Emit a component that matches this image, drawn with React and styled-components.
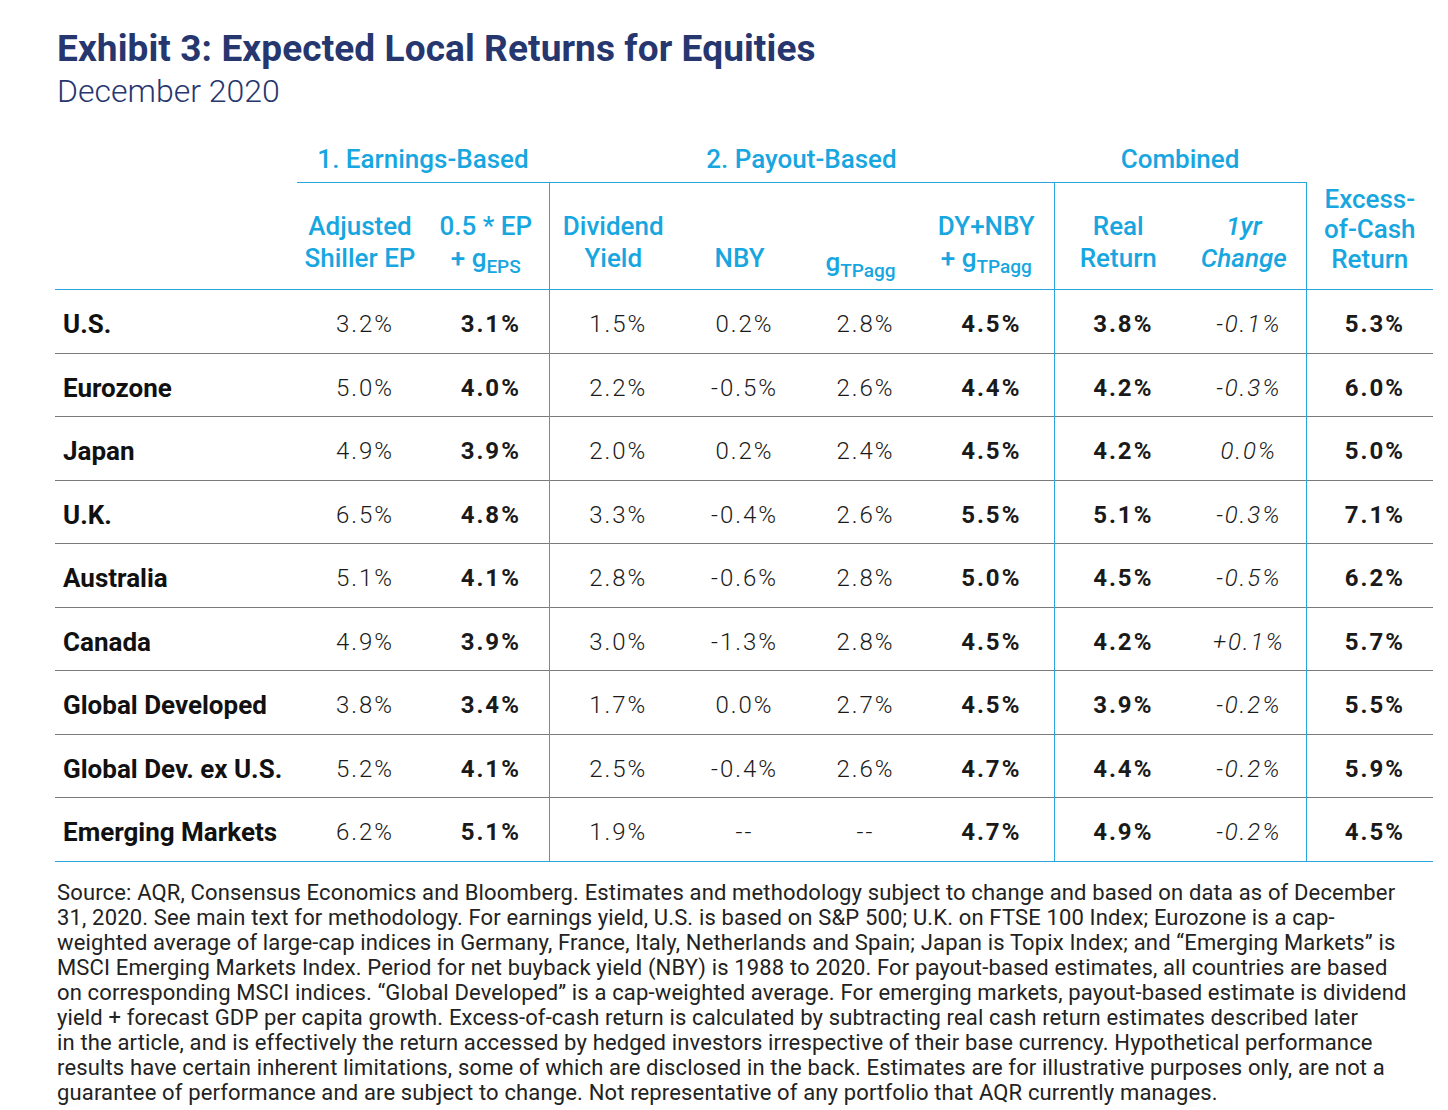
import React from 'react';
import styled, { createGlobalStyle } from 'styled-components';

const GlobalStyle = createGlobalStyle`
  body { margin: 0; background: #fff; font-family: Roboto, "Liberation Sans", sans-serif; }
`;

const rows = [
  ['U.S.', '3.2%', '3.1%', '1.5%', '0.2%', '2.8%', '4.5%', '3.8%', '-0.1%', '5.3%'],
  ['Eurozone', '5.0%', '4.0%', '2.2%', '-0.5%', '2.6%', '4.4%', '4.2%', '-0.3%', '6.0%'],
  ['Japan', '4.9%', '3.9%', '2.0%', '0.2%', '2.4%', '4.5%', '4.2%', '0.0%', '5.0%'],
  ['U.K.', '6.5%', '4.8%', '3.3%', '-0.4%', '2.6%', '5.5%', '5.1%', '-0.3%', '7.1%'],
  ['Australia', '5.1%', '4.1%', '2.8%', '-0.6%', '2.8%', '5.0%', '4.5%', '-0.5%', '6.2%'],
  ['Canada', '4.9%', '3.9%', '3.0%', '-1.3%', '2.8%', '4.5%', '4.2%', '+0.1%', '5.7%'],
  ['Global Developed', '3.8%', '3.4%', '1.7%', '0.0%', '2.7%', '4.5%', '3.9%', '-0.2%', '5.5%'],
  ['Global Dev. ex U.S.', '5.2%', '4.1%', '2.5%', '-0.4%', '2.6%', '4.7%', '4.4%', '-0.2%', '5.9%'],
  ['Emerging Markets', '6.2%', '5.1%', '1.9%', '--', '--', '4.7%', '4.9%', '-0.2%', '4.5%'],
];

// how each value column is drawn
const kinds = ['light', 'bold', 'light', 'light', 'light', 'bold', 'bold', 'italic', 'bold'];
// value columns that start a new group (blue rule on the left)
const splits = [2, 6, 8];
const widths = [242, 126, 126, 128, 125, 117, 135, 128, 124, 127];

const notes = [
  'Source: AQR, Consensus Economics and Bloomberg. Estimates and methodology subject to change and based on data as of December',
  '31, 2020. See main text for methodology. For earnings yield, U.S. is based on S&P 500; U.K. on FTSE 100 Index; Eurozone is a cap-',
  'weighted average of large-cap indices in Germany, France, Italy, Netherlands and Spain; Japan is Topix Index; and \u201cEmerging Markets\u201d is',
  'MSCI Emerging Markets Index. Period for net buyback yield (NBY) is 1988 to 2020. For payout-based estimates, all countries are based',
  'on corresponding MSCI indices. \u201cGlobal Developed\u201d is a cap-weighted average. For emerging markets, payout-based estimate is dividend',
  'yield + forecast GDP per capita growth. Excess-of-cash return is calculated by subtracting real cash return estimates described later',
  'in the article, and is effectively the return accessed by hedged investors irrespective of their base currency. Hypothetical performance',
  'results have certain inherent limitations, some of which are disclosed in the back. Estimates are for illustrative purposes only, are not a',
  'guarantee of performance and are subject to change. Not representative of any portfolio that AQR currently manages.',
];

function App() {
  return (
    <Page>
      <GlobalStyle />
      <Title>Exhibit 3: Expected Local Returns for Equities</Title>
      <Subtitle>December 2020</Subtitle>

      <Table>
        <colgroup>
          {widths.map((w, i) => <col key={i} style={{ width: w }} />)}
        </colgroup>
        <thead>
          <tr>
            <GroupCell $blank />
            <GroupCell colSpan={2}>1. Earnings-Based</GroupCell>
            <GroupCell colSpan={4}>2. Payout-Based</GroupCell>
            <GroupCell colSpan={2}>Combined</GroupCell>
            <GroupCell $blank />
          </tr>
          <SubRow>
            <HeadCell />
            <HeadCell>Adjusted<br />Shiller EP</HeadCell>
            <HeadCell>0.5 * EP<br />+ g<Sub>EPS</Sub></HeadCell>
            <HeadCell $split>Dividend<br />Yield</HeadCell>
            <HeadCell>NBY</HeadCell>
            <HeadCell><Low>g<Sub>TPagg</Sub></Low></HeadCell>
            <HeadCell>DY+NBY<br />+ g<Sub>TPagg</Sub></HeadCell>
            <HeadCell $split>Real<br />Return</HeadCell>
            <HeadCell $italic>1yr<br />Change</HeadCell>
            <HeadCell $split $tall>Excess-<br />of-Cash<br />Return</HeadCell>
          </SubRow>
        </thead>
        <tbody>
          {rows.map((r, ri) => (
            <DataRow key={r[0]} $last={ri === rows.length - 1}>
              <Label>{r[0]}</Label>
              {r.slice(1).map((v, ci) => (
                <Value key={ci} $kind={kinds[ci]} $split={splits.includes(ci)}>{v}</Value>
              ))}
            </DataRow>
          ))}
        </tbody>
      </Table>

      <Notes>
        {notes.map((n, i) => <NoteLine key={i}>{n}</NoteLine>)}
      </Notes>
    </Page>
  );
}

const navy = '#26366f';
const cyan = '#17a6e0';
const rule = '#2aa6dc';

const Page = styled.div`
  width: 1448px;
  height: 1110px;
  padding: 27px 15px 0 55px;
  box-sizing: border-box;
  overflow: hidden;
`;

const Title = styled.h1`
  margin: 0 0 0 2px;
  font-family: Roboto, "Liberation Sans", sans-serif;
  font-weight: 700;
  font-size: 37px;
  line-height: 44px;
  letter-spacing: 0.1px;
  color: ${navy};
`;

const Subtitle = styled.div`
  margin: 0 0 0 2px;
  font-weight: 300;
  font-size: 32px;
  line-height: 40px;
  color: ${navy};
`;

const Table = styled.table`
  margin-top: 21px;
  width: 1378px;
  border-collapse: collapse;
  table-layout: fixed;
`;

const GroupCell = styled.th`
  height: 42px;
  padding: 0 0 8px;
  vertical-align: bottom;
  font-weight: 500;
  font-size: 26px;
  color: ${cyan};
  text-align: center;
  border-bottom: ${p => (p.$blank ? 'none' : `1px solid ${rule}`)};
`;

const SubRow = styled.tr`
  height: 107px;
  border-bottom: 1px solid ${rule};
`;

const HeadCell = styled.th`
  padding: 0 0 15px;
  vertical-align: bottom;
  text-align: center;
  font-weight: 500;
  font-size: 26px;
  line-height: ${p => (p.$tall ? '30px' : '32px')};
  font-style: ${p => (p.$italic ? 'italic' : 'normal')};
  color: ${cyan};
  border-left: ${p => (p.$split ? `1px solid ${rule}` : 'none')};
`;

const Sub = styled.sub`
  font-size: 19px;
  vertical-align: -6px;
  line-height: 0;
`;

const Low = styled.span`
  position: relative;
  top: 4px;
`;

const DataRow = styled.tr`
  height: 63.5px;
  border-bottom: 1px solid ${p => (p.$last ? rule : '#7a7a7a')};
`;

const Label = styled.td`
  padding: 6px 0 0 8px;
  font-weight: 700;
  font-size: 26px;
  color: #111;
  white-space: nowrap;
`;

const Value = styled.td`
  padding: 6px 0 0 10px;
  text-align: center;
  font-size: 24px;
  color: #1a1a1a;
  letter-spacing: 2px;
  font-weight: ${p => (p.$kind === 'bold' ? 700 : 300)};
  font-style: ${p => (p.$kind === 'italic' ? 'italic' : 'normal')};
  border-left: ${p => (p.$split ? `1px solid ${rule}` : 'none')};
`;

const Notes = styled.div`
  margin-top: 18px;
  margin-left: 2px;
  font-size: 22px;
  line-height: 25px;
  letter-spacing: 0.15px;
  color: #222;
`;

const NoteLine = styled.div`
  white-space: nowrap;
`;

export default App;
